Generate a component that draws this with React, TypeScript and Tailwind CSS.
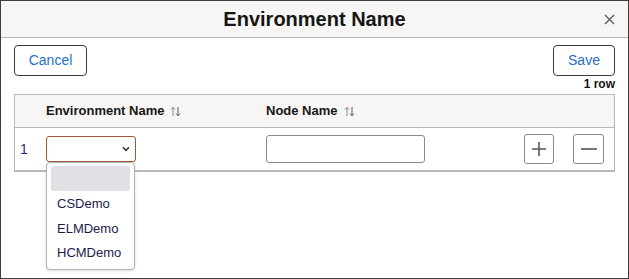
import React from "react";

function SortIcon() {
  return (
    <svg width="11" height="11" viewBox="0 0 11 11" className="ml-[6px] inline-block">
      <path d="M3 10V1.5M1 3.5L3 1.2L5 3.5" stroke="#8a8a8a" strokeWidth="1" fill="none" />
      <path d="M8 1v8.5M6 7.5L8 9.8L10 7.5" stroke="#5a5a5a" strokeWidth="1" fill="none" />
    </svg>
  );
}

function App() {
  return (
    <div className="relative flex h-[279px] w-[629px] flex-col border border-[#3f3c3a] bg-white font-['Liberation_Sans',Arial,sans-serif]">
      <div className="relative flex h-[37px] shrink-0 items-center justify-center border-b border-[#b8b5b0] bg-[#f7f6f4]">
        <h1 className="text-[20px] font-bold text-[#161616]">Environment Name</h1>
        <button className="absolute right-[13px] top-[13px] text-[#555]">
          <svg width="11" height="11" viewBox="0 0 11 11">
            <path d="M1 1L10 10M10 1L1 10" stroke="#5b5b5b" strokeWidth="1.4" />
          </svg>
        </button>
      </div>

      <div className="flex flex-col px-[13px]">
        <div className="mt-[7px] flex items-center justify-between">
          <button className="h-[31px] w-[73px] rounded-[4px] border border-[#3b3b3b] text-[14px] text-[#1f6fc5]">
            Cancel
          </button>
          <button className="h-[31px] w-[62px] rounded-[4px] border border-[#3b3b3b] text-[14px] text-[#1f6fc5]">
            Save
          </button>
        </div>
        <div className="mt-[1px] text-right text-[12px] font-bold leading-[14px] text-[#161616]">1 row</div>

        <div className="mt-[3px] border border-[#bcb9b4] border-b-2">
          <div className="grid h-[33px] grid-cols-[31px_220px_258px_49px_1fr] items-center border-b border-[#bcb9b4] bg-[#f7f6f4] text-[13px] font-bold text-[#161616]">
            <div />
            <div className="flex items-center">
              Environment Name
              <SortIcon />
            </div>
            <div className="flex items-center">
              Node Name
              <SortIcon />
            </div>
            <div />
            <div />
          </div>
          <div className="grid h-[42px] grid-cols-[31px_220px_258px_49px_1fr] items-center">
            <div className="pl-[5px] text-[14px] text-[#2a2a7a]">1</div>
            <div className="relative">
              <div className="flex h-[26px] w-[90px] items-center justify-end rounded-[3px] border border-[#a0583a] bg-white pr-[5px]">
                <svg width="8" height="6" viewBox="0 0 8 6">
                  <path d="M1 1.2L4 4.3L7 1.2" stroke="#333" strokeWidth="1.5" fill="none" />
                </svg>
              </div>
              <div className="absolute left-0 top-[26px] z-10 flex h-[108px] w-[89px] flex-col rounded-[4px] border border-[#b3b3b3] bg-white px-[4px] pt-[3px] shadow-[0_1px_3px_rgba(0,0,0,0.15)]">
                <div className="h-[25px] shrink-0 rounded-[3px] bg-[#e1e1e5]" />
                <div className="flex h-[25px] shrink-0 items-center pl-[6px] text-[13px] text-[#1c1c4a]">CSDemo</div>
                <div className="flex h-[25px] shrink-0 items-center pl-[6px] text-[13px] text-[#1c1c4a]">ELMDemo</div>
                <div className="flex h-[24px] shrink-0 items-center pl-[6px] text-[13px] text-[#1c1c4a]">HCMDemo</div>
              </div>
            </div>
            <div>
              <div className="h-[28px] w-[159px] rounded-[3px] border border-[#8a8a8a] bg-white" />
            </div>
            <div>
              <button className="flex h-[30px] w-[30px] items-center justify-center rounded-[3px] border border-[#8a8a8a] bg-white">
                <svg width="16" height="16" viewBox="0 0 16 16">
                  <path d="M8 1V15M1 8H15" stroke="#555" strokeWidth="1.6" />
                </svg>
              </button>
            </div>
            <div>
              <button className="flex h-[30px] w-[31px] items-center justify-center rounded-[3px] border border-[#8a8a8a] bg-white">
                <svg width="18" height="4" viewBox="0 0 18 4">
                  <path d="M1 2H17" stroke="#555" strokeWidth="1.6" />
                </svg>
              </button>
            </div>
          </div>
        </div>
      </div>
    </div>
  );
}

export default App;
